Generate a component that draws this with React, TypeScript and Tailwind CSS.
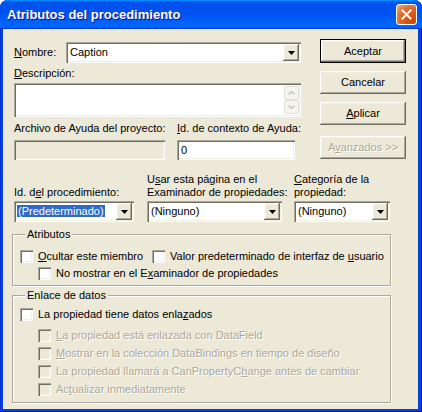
import React from "react";

const sunken = "shadow-[inset_1px_1px_#aca899,inset_2px_2px_#716f64,inset_-1px_-1px_#fff,inset_-2px_-2px_#f1efe2]";
const raised = "shadow-[inset_-1px_-1px_#716f64,inset_1px_1px_#fff,inset_-2px_-2px_#aca899,inset_2px_2px_#f1efe2]";
const dim = "text-[#aca899] [text-shadow:1px_1px_0_#fff]";

function Arrow() {
  return (
    <div className={`flex h-[17px] w-[16px] items-center justify-center bg-[#ece9d8] ${raised}`}>
      <svg width="7" height="4" viewBox="0 0 7 4"><polygon points="0,0 7,0 3.5,4" fill="#000" /></svg>
    </div>
  );
}

function Combo({ width, children }: { width: string; children: React.ReactNode }) {
  return (
    <div className={`flex h-[21px] items-center bg-white pl-[2px] pr-[2px] ${width} ${sunken}`}>
      <div className="flex-1 overflow-hidden whitespace-nowrap">{children}</div>
      <Arrow />
    </div>
  );
}

function Check({ label, disabled }: { label: React.ReactNode; disabled?: boolean }) {
  return (
    <div className="flex h-[13px] items-center gap-[5px] whitespace-nowrap">
      <div className={`h-[13px] w-[13px] shrink-0 ${disabled ? "bg-[#ece9d8]" : "bg-white"} ${sunken}`} />
      <span className={disabled ? dim : ""}>{label}</span>
    </div>
  );
}

function Button({ children, main, disabled, top }: { children: React.ReactNode; main?: boolean; disabled?: boolean; top: string }) {
  return (
    <div className={`${top} ${main ? "border border-black" : ""}`}>
      <div className={`flex ${main ? "h-[22px] w-[84px]" : "h-[23px] w-[86px]"} items-center justify-center bg-[#ece9d8] ${raised} ${disabled ? dim : ""}`}>
        {children}
      </div>
    </div>
  );
}

function ScrollBtn({ up }: { up?: boolean }) {
  return (
    <div className="flex h-[14px] w-[15px] items-center justify-center rounded-[2px] border border-[#e3e1d7] bg-[#f5f4ef]">
      <svg width="7" height="4" viewBox="0 0 7 4">
        <polyline points={up ? "0.5,3.5 3.5,0.5 6.5,3.5" : "0.5,0.5 3.5,3.5 6.5,0.5"} fill="none" stroke="#c9c7ba" strokeWidth="1.5" />
      </svg>
    </div>
  );
}

export default function App() {
  return (
    <div className="h-[412px] w-[422px] bg-white font-['Liberation_Sans',Arial,sans-serif] text-[11px] leading-[13px] text-black">
      <div className="flex h-[412px] flex-col rounded-t-[8px] bg-[#0842d8] shadow-[inset_-1px_-1px_#00138c,inset_1px_1px_#0831d9]">
        <div className="flex h-[29px] items-center justify-between rounded-t-[8px] bg-[linear-gradient(180deg,#0997ff,#0053ee_8%,#0050ee_40%,#06f_88%,#06f_93%,#005bff_95%,#003dd7_96%,#003dd7)] pl-[7px] pr-[5px]">
          <span className="text-[13px] font-bold text-white [text-shadow:1px_1px_#0f1089]">Atributos del procedimiento</span>
          <div className="flex h-[21px] w-[21px] items-center justify-center rounded-[3px] border border-white bg-[radial-gradient(circle_at_85%_85%,#cc4600_0%,#dc6527_55%,#e58a5c_80%,#f5b89a_100%)]">
            <svg width="11" height="11" viewBox="0 0 11 11">
              <path d="M1.5 1.5 L9.5 9.5 M9.5 1.5 L1.5 9.5" stroke="#fff" strokeWidth="2" strokeLinecap="square" />
            </svg>
          </div>
        </div>

        <div className="ml-[3px] mr-[4px] h-[380px] bg-[#ece9d8] pl-[9px]">
          <div className="flex">
            <div className="w-[289px] pl-[2px] pt-[13px]">
              <div className="flex h-[21px] items-center">
                <span className="w-[52px]"><u>N</u>ombre:</span>
                <Combo width="w-[235px]"><span className="pl-[2px]">Caption</span></Combo>
              </div>
              <div className="mt-[4px] h-[13px]"><u>D</u>escripción:</div>
              <div className={`mt-[3px] flex h-[34px] w-[287px] justify-end bg-white p-[2px] ${sunken}`}>
                <div className="flex flex-col justify-between py-[1px]">
                  <ScrollBtn up />
                  <ScrollBtn />
                </div>
              </div>
              <div className="mt-[5px] flex">
                <div className="w-[163px]">
                  <div className="h-[13px] whitespace-nowrap">Archivo de Ayuda del proyecto:</div>
                  <div className={`mt-[5px] h-[20px] w-[151px] bg-[#ece9d8] ${sunken}`} />
                </div>
                <div>
                  <div className="h-[13px] whitespace-nowrap"><u>I</u>d. de contexto de Ayuda:</div>
                  <div className={`mt-[5px] flex h-[20px] w-[118px] items-center bg-white pl-[4px] ${sunken}`}>0</div>
                </div>
              </div>
            </div>
            <div className="ml-[19px]">
              <Button main top="mt-[10px]">Aceptar</Button>
              <Button top="mt-[8px]">Cancelar</Button>
              <Button top="mt-[8px]"><span><u>A</u>plicar</span></Button>
              <Button disabled top="mt-[11px]"><span>A<u>v</u>anzados &gt;&gt;</span></Button>
            </div>
          </div>

          <div className="mt-[13px] flex items-end pl-[2px]">
            <div className="w-[120px] whitespace-nowrap">
              <div>Id. d<u>e</u>l procedimiento:</div>
              <div className="mt-[2px]">
                <Combo width="w-[120px]">
                  <span className="ml-[1px] bg-[#316ac5] px-[1px] text-white">(Predeterminado)</span>
                </Combo>
              </div>
            </div>
            <div className="ml-[13px] w-[135px] whitespace-nowrap">
              <div>U<u>s</u>ar esta página en el</div>
              <div>Examinador de propiedades:</div>
              <div className="mt-[2px]">
                <Combo width="w-[135px]"><span className="pl-[2px]">(Ninguno)</span></Combo>
              </div>
            </div>
            <div className="ml-[12px] w-[96px] whitespace-nowrap">
              <div><u>C</u>ategoría de la</div>
              <div>propiedad:</div>
              <div className="mt-[2px]">
                <Combo width="w-[96px]"><span className="pl-[2px]">(Ninguno)</span></Combo>
              </div>
            </div>
          </div>

          <fieldset className="mt-[6px] h-[58px] w-[379px] border border-[#aca899] pl-[7px] shadow-[1px_1px_0_#fff,inset_1px_1px_0_#fff]">
            <legend className="ml-[5px] bg-[#ece9d8] px-[2px]">Atributos</legend>
            <div className="mt-[9px] flex">
              <div className="w-[132px]"><Check label={<><u>O</u>cultar este miembro</>} /></div>
              <Check label={<>Valor predeterminado de interfaz de <u>u</u>suario</>} />
            </div>
            <div className="mt-[4px] pl-[18px]">
              <Check label={<>No mostrar en el E<u>x</u>aminador de propiedades</>} />
            </div>
          </fieldset>

          <fieldset className="mt-[3px] h-[114px] w-[379px] border border-[#aca899] pl-[7px] shadow-[1px_1px_0_#fff,inset_1px_1px_0_#fff]">
            <legend className="ml-[5px] bg-[#ece9d8] px-[2px]">Enlace de datos</legend>
            <div className="mt-[6px]">
              <Check label={<>La propiedad tiene datos enla<u>z</u>ados</>} />
            </div>
            <div className="mt-[8px] flex flex-col gap-[5px] pl-[18px]">
              <Check disabled label={<><u>L</u>a propiedad está enlazada con DataField</>} />
              <Check disabled label={<><u>M</u>ostrar en la colección DataBindings en tiempo de diseño</>} />
              <Check disabled label={<>La propiedad llamará a CanPropertyC<u>h</u>ange antes de cambiar</>} />
              <Check disabled label={<>Ac<u>t</u>ualizar inmediatamente</>} />
            </div>
          </fieldset>
        </div>
      </div>
    </div>
  );
}
